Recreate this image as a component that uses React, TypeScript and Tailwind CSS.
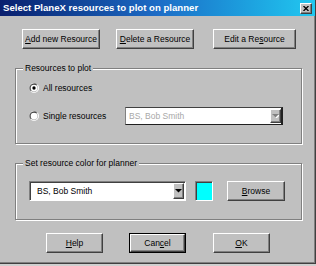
import React from 'react'

const font = { fontFamily: '"Liberation Sans", Arial, sans-serif' }

const raised =
  'border border-t-white border-l-white border-r-[#404040] border-b-[#404040] shadow-[inset_-1px_-1px_0_#808080] bg-[#c0c0c0]'
const sunken =
  'border border-t-[#808080] border-l-[#808080] border-r-white border-b-white shadow-[inset_1px_1px_0_#404040]'

const Btn = ({ children, w, def }: { children: React.ReactNode; w: string; def?: boolean }) => {
  if (def) {
    return (
      <div className={`${w} h-[20px] border border-black flex`}>
        <div className={`${raised} flex-1 flex items-center justify-center text-[8.5px] text-black`}>{children}</div>
      </div>
    )
  }
  return (
    <div className={`${raised} ${w} h-[20px] flex items-center justify-center text-[8.5px] text-black`}>{children}</div>
  )
}

const Radio = ({ checked }: { checked?: boolean }) => (
  <svg width="10" height="10" viewBox="0 0 12 12">
    <circle cx="6" cy="6" r="6" fill="#ffffff" />
    <path d="M1.76 10.24 A6 6 0 0 1 10.24 1.76 Z" fill="#808080" />
    <circle cx="6" cy="6" r="5" fill="#c0c0c0" />
    <path d="M2.46 9.54 A5 5 0 0 1 9.54 2.46 Z" fill="#404040" />
    <circle cx="6" cy="6" r="4" fill="#ffffff" />
    {checked && <circle cx="6" cy="6" r="2" fill="#000000" />}
  </svg>
)

const DropBtn = ({ disabled }: { disabled?: boolean }) => (
  <div className={`${raised} w-[11px] h-full flex items-center justify-center`}>
    <svg width="7" height="4" viewBox="0 0 7 4">
      {disabled && <path d="M1 1 H8 L4.5 4.5 Z" fill="#ffffff" />}
      <path d="M0 0 H7 L3.5 3.5 Z" fill={disabled ? '#808080' : '#000000'} />
    </svg>
  </div>
)

const Group = ({ label, h, children }: { label: string; h: string; children: React.ReactNode }) => (
  <div
    className={`relative ml-[15px] w-[287px] ${h} border border-[#808080] shadow-[inset_1px_1px_0_#ffffff,1px_1px_0_#ffffff]`}
  >
    <span className="absolute left-[7px] top-[-7px] px-[2px] bg-[#c0c0c0] text-[8.5px] leading-[12px] text-black">
      {label}
    </span>
    {children}
  </div>
)

export default function App() {
  return (
    <div className="w-[316px] h-[266px] bg-[#d0d0d0]" style={font}>
      <div className="w-[316px] h-[264px] bg-[#c0c0c0] border-r border-b border-[#404040] shadow-[inset_-1px_-1px_0_#808080] flex flex-col">
        <div className="h-[16px] bg-linear-to-r from-[#0a1f6e] via-[#1d6cc6] to-[#22c8f0] flex items-center pl-[3px] pr-[3px]">
          <span className="text-white font-bold text-[9.6px] leading-[16px] flex-1">
            Select PlaneX resources to plot on planner
          </span>
          <div className={`${raised} w-[12px] h-[11px] flex items-center justify-center`}>
            <svg width="6" height="5" viewBox="0 0 6 5">
              <path d="M0.5 0 L5.5 5 M5.5 0 L0.5 5" stroke="#000" strokeWidth="1.3" />
            </svg>
          </div>
        </div>

        <div className="mt-[13px] flex">
          <div className="ml-[22px]">
            <Btn w="w-[78px]">
              <span><u>A</u>dd new Resource</span>
            </Btn>
          </div>
          <div className="ml-[16px]">
            <Btn w="w-[78px]">
              <span><u>D</u>elete a Resource</span>
            </Btn>
          </div>
          <div className="ml-[19px]">
            <Btn w="w-[83px]">
              <span>Edit a Re<u>s</u>ource</span>
            </Btn>
          </div>
        </div>

        <div className="mt-[19px]">
          <Group label="Resources to plot" h="h-[76px]">
            <div className="pt-[12px] pl-[13px] flex flex-col">
              <div className="h-[14px] flex items-center gap-[4px]">
                <Radio checked />
                <span className="text-[8.5px] text-black">All resources</span>
              </div>
              <div className="mt-[12px] h-[18px] flex items-center">
                <Radio />
                <span className="ml-[4px] w-[82px] text-[8.5px] text-black">Single resources</span>
                <div className="w-[158px] h-[18px] bg-white border border-[#202020] border-l-[#808080] border-t-[#404040] border-r-2 flex">
                  <span className="flex-1 pl-[3px] text-[8.5px] leading-[16px] text-[#a8a8a8]">BS, Bob Smith</span>
                  <div className="py-[1px]">
                    <DropBtn disabled />
                  </div>
                </div>
              </div>
            </div>
          </Group>
        </div>

        <div className="mt-[19px]">
          <Group label="Set resource color for planner" h="h-[57px]">
            <div className="pt-[17px] pl-[13px] flex items-center">
              <div className={`${sunken} w-[157px] h-[20px] bg-white flex p-[1px]`}>
                <span className="flex-1 pl-[6px] text-[8.5px] leading-[16px] text-black">BS, Bob Smith</span>
                <DropBtn />
              </div>
              <div className={`${sunken} ml-[9px] w-[18px] h-[20px] bg-[#00ffff]`} />
              <div className="ml-[14px]">
                <Btn w="w-[58px]">
                  <span><u>B</u>rowse</span>
                </Btn>
              </div>
            </div>
          </Group>
        </div>

        <div className="mt-[13px] flex">
          <div className="ml-[46px]">
            <Btn w="w-[57px]">
              <span><u>H</u>elp</span>
            </Btn>
          </div>
          <div className="ml-[26px]">
            <Btn w="w-[57px]" def>
              <span>Can<u>c</u>el</span>
            </Btn>
          </div>
          <div className="ml-[27px]">
            <Btn w="w-[57px]">
              <span><u>O</u>K</span>
            </Btn>
          </div>
        </div>
      </div>
    </div>
  )
}
